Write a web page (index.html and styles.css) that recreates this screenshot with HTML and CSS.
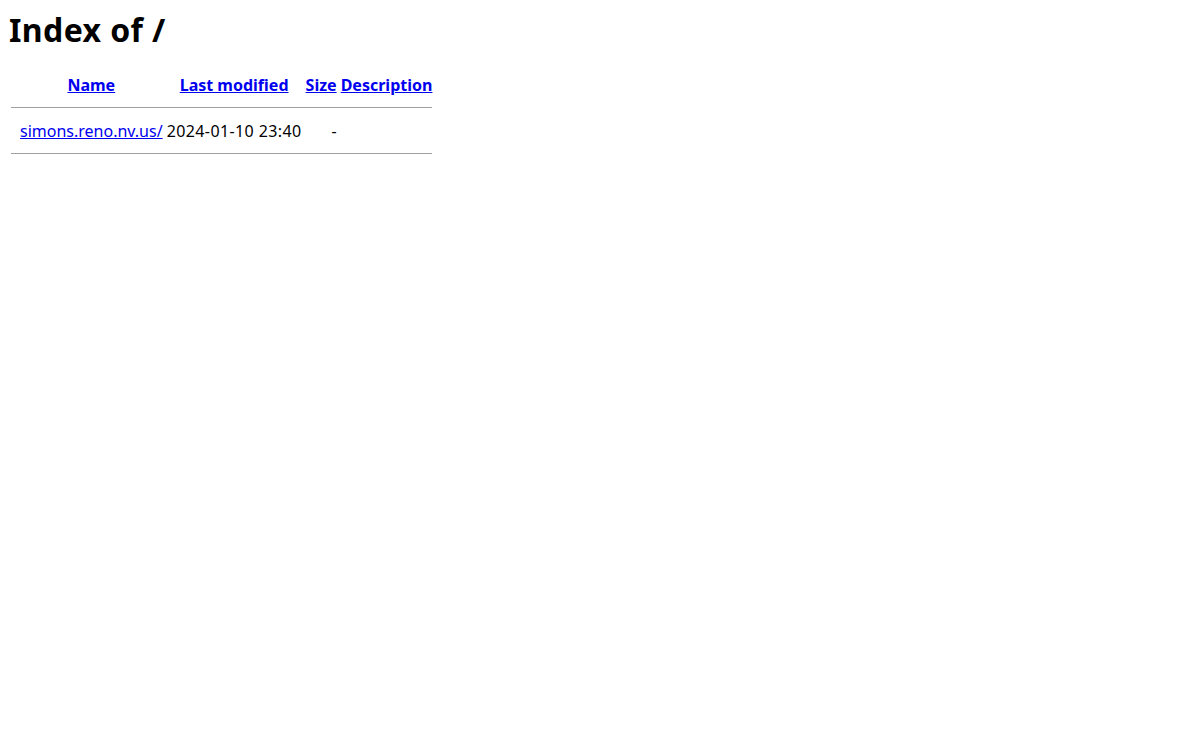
FILE: index.html
```
<!DOCTYPE html>
<html>
<head>
    <meta charset="UTF-8">
    <title>Index of /</title>
    <link rel="stylesheet" href="styles.css">
</head>
<body>
<h1>Index of /</h1>
<table class="listing">
    <tr>
        <th class="icon"></th>
        <th class="col-name"><a href="?C=N;O=D">Name</a></th>
        <th class="col-date"><a href="?C=M;O=A">Last modified</a></th>
        <th class="col-size"><a href="?C=S;O=A">Size</a></th>
        <th class="col-desc"><a href="?C=D;O=A">Description</a></th>
    </tr>
    <tr><th colspan="5"><hr></th></tr>
    <tr>
        <td class="icon"></td>
        <td><a href="simons.reno.nv.us/">simons.reno.nv.us/</a></td>
        <td class="right date">2024-01-10 23:40</td>
        <td class="right">-</td>
        <td>&nbsp;</td>
    </tr>
    <tr><th colspan="5"><hr></th></tr>
</table>
</body>
</html>
```

FILE: styles.css
```
body {
    font-family: "Noto Sans", Arial, sans-serif;
    font-size: 16px;
    color: #000;
    background: #fff;
}
h1 {
    font-size: 32px;
    letter-spacing: 0.4px;
    margin: 0 0 20px 1px;
}
a {
    color: #0000ee;
}
.listing {
    border-spacing: 2px;
}
.listing th, .listing td {
    padding: 1px;
}
.icon {
    width: 5px;
}
.col-name {
    width: 142px;
}
.col-date {
    width: 135px;
}
.right {
    text-align: right;
}
.date {
    letter-spacing: 0.4px;
}
.listing hr {
    border: none;
    border-top: 1px solid #a0a0a0;
    margin: 7px 0 8px;
}
```
